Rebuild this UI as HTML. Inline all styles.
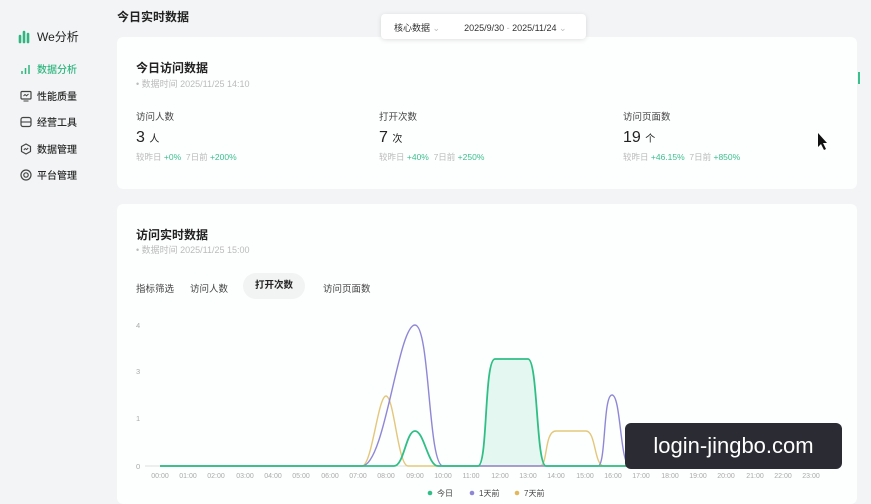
<!DOCTYPE html>
<html><head><meta charset="utf-8">
<style>
*{margin:0;padding:0;box-sizing:border-box}
body{width:871px;height:499px;overflow:hidden;background:#f2f4f5;font-family:"Liberation Sans","Noto Sans CJK SC",sans-serif;color:#222;position:relative}
.abs{position:absolute}
.side div{position:absolute;left:20px;font-size:10px;color:#2a2a2a;display:flex;align-items:center;gap:5px;font-weight:500}
.card{position:absolute;background:#fdfefe;border-radius:6px}
.t{font-size:12px;font-weight:bold;color:#222}
.s{font-size:9px;color:#bbb}
.lab{font-size:9.5px;color:#444}
.num{font-size:16px;color:#222}
.num small{font-size:10px}
.g{color:#3cbf8f}
.cmp{font-size:8.5px;color:#bbb}
</style></head><body>
<div class="side">
 <div style="top:28px;left:18px;font-size:12px;color:#222;font-weight:normal"><svg width="14" height="14" viewBox="0 0 14 14"><path d="M2 12V6M6 12V2M10 12V4" stroke="#2fb57f" stroke-width="2.6" stroke-linecap="round"/></svg>We分析</div>
 <div style="top:61px;color:#2fb57f"><svg width="12" height="12"><path d="M2 11V8M5.5 11V5M9 11V2" stroke="#2fb57f" stroke-width="1.5"/></svg>数据分析</div>
 <div style="top:88px"><svg width="12" height="12"><rect x="1" y="1.5" width="10" height="7.5" rx="1" fill="none" stroke="#444" stroke-width="1.2"/><path d="M3.5 11H8.5M3.5 6L5 4.5L6.5 5.8L8.5 4" fill="none" stroke="#444" stroke-width="1"/></svg>性能质量</div>
 <div style="top:114px"><svg width="12" height="12"><rect x="1" y="1.5" width="10" height="9" rx="2" fill="none" stroke="#444" stroke-width="1.2"/><path d="M1 6H11" stroke="#444" stroke-width="1.1"/></svg>经营工具</div>
 <div style="top:141px"><svg width="12" height="12"><path d="M6 1L10.5 3.5V8.5L6 11L1.5 8.5V3.5Z" fill="none" stroke="#444" stroke-width="1.2" stroke-linejoin="round"/><path d="M3.8 7L5.2 5.5L6.6 6.6L8.2 5" fill="none" stroke="#444" stroke-width="1"/></svg>数据管理</div>
 <div style="top:167px"><svg width="12" height="12"><circle cx="6" cy="6" r="5" fill="none" stroke="#444" stroke-width="1.2"/><circle cx="6" cy="6" r="2.2" fill="none" stroke="#444" stroke-width="1.2"/></svg>平台管理</div>
</div>
<div class="abs" style="left:117px;top:8px;font-size:12px;font-weight:bold">今日实时数据</div>
<div class="card" style="left:117px;top:37px;width:740px;height:152px">
 <div class="t abs" style="left:19px;top:22px">今日访问数据</div>
 <div class="s abs" style="left:19px;top:40px">• 数据时间 2025/11/25 14:10</div>
 <div class="abs" style="left:19px;top:72px"><div class="lab">访问人数</div><div class="num" style="margin-top:6px">3 <small>人</small></div><div class="cmp" style="margin-top:4px">较昨日 <span class="g">+0%</span>&nbsp; 7日前 <span class="g">+200%</span></div></div>
 <div class="abs" style="left:262px;top:72px"><div class="lab">打开次数</div><div class="num" style="margin-top:6px">7 <small>次</small></div><div class="cmp" style="margin-top:4px">较昨日 <span class="g">+40%</span>&nbsp; 7日前 <span class="g">+250%</span></div></div>
 <div class="abs" style="left:506px;top:72px"><div class="lab">访问页面数</div><div class="num" style="margin-top:6px">19 <small>个</small></div><div class="cmp" style="margin-top:4px">较昨日 <span class="g">+46.15%</span>&nbsp; 7日前 <span class="g">+850%</span></div></div>
</div>
<div class="abs" style="left:381px;top:14px;width:205px;height:25px;background:#fff;border-radius:4px;box-shadow:0 1px 5px rgba(0,0,0,.12);font-size:9px;color:#333;padding:7px 0 0 13px">核心数据 <span style="color:#bbb">⌄</span><span style="margin-left:24px">2025/9/30 <span style="color:#bbb">-</span> 2025/11/24 <span style="color:#bbb">⌄</span></span></div>
<div class="abs" style="left:858px;top:72px;width:2px;height:12px;background:#3cbf8f"></div>
<div class="card" style="left:117px;top:204px;width:740px;height:300px">
 <div class="t abs" style="left:19px;top:22px">访问实时数据</div>
 <div class="s abs" style="left:19px;top:39px">• 数据时间 2025/11/25 15:00</div>
 <div class="abs lab" style="left:19px;top:77px">指标筛选</div>
 <div class="abs lab" style="left:73px;top:77px">访问人数</div>
 <div class="abs" style="left:126px;top:69px;width:62px;height:26px;background:#f2f3f3;border-radius:13px;font-size:9.5px;font-weight:bold;text-align:center;line-height:26px">打开次数</div>
 <div class="abs lab" style="left:206px;top:77px">访问页面数</div>
</div>
<svg class="abs" style="left:0;top:0" width="871" height="499">
 <g font-size="7.5" fill="#aaa" font-family="Liberation Sans">
  <text x="136" y="328">4</text><text x="136" y="374">3</text><text x="136" y="421">1</text><text x="136" y="469">0</text>
 </g>
 <line x1="145" y1="466" x2="825" y2="466" stroke="#ddd"/>
 <g font-size="7" fill="#aaa" font-family="Liberation Sans" text-anchor="middle">
  <text x="160" y="478">00:00</text><text x="188" y="478">01:00</text><text x="216" y="478">02:00</text><text x="245" y="478">03:00</text><text x="273" y="478">04:00</text><text x="301" y="478">05:00</text><text x="330" y="478">06:00</text><text x="358" y="478">07:00</text><text x="386" y="478">08:00</text><text x="415" y="478">09:00</text><text x="443" y="478">10:00</text><text x="471" y="478">11:00</text><text x="500" y="478">12:00</text><text x="528" y="478">13:00</text><text x="556" y="478">14:00</text><text x="585" y="478">15:00</text><text x="613" y="478">16:00</text><text x="641" y="478">17:00</text><text x="670" y="478">18:00</text><text x="698" y="478">19:00</text><text x="726" y="478">20:00</text><text x="755" y="478">21:00</text><text x="783" y="478">22:00</text><text x="811" y="478">23:00</text>
 </g>
 <path d="M480 466C488 466 486 359 495 359H528C538 359 536 466 545 466Z" fill="#d9f3e9" opacity=".7"/>
 <path d="M160 466H362C372 466 378 396 386 396C394 396 398 466 408 466H540C548 466 544 431 556 431H586C596 431 594 466 604 466H825" fill="none" stroke="#e3c77a" stroke-width="1.4"/>
 <path d="M160 466H362C385 466 398 325 415 325C430 325 428 466 443 466H598C606 466 603 395 612 395C621 395 620 466 630 466H825" fill="none" stroke="#8f87d6" stroke-width="1.4"/>
 <path d="M160 466H394C404 466 406 431 415 431C424 431 428 466 438 466H478C488 466 484 359 495 359H528C538 359 536 466 546 466H825" fill="none" stroke="#2fbf86" stroke-width="1.8"/>
 <g font-size="8" fill="#444">
  <circle cx="430" cy="493" r="2.3" fill="#2fbf86"/><text x="437" y="496">今日</text>
  <circle cx="472" cy="493" r="2.3" fill="#8f87d6"/><text x="479" y="496">1天前</text>
  <circle cx="517" cy="493" r="2.3" fill="#e3b85a"/><text x="524" y="496">7天前</text>
 </g>
 <path d="M818 133V147L821 144L824 150L826 149L823 143H827Z" fill="#111"/>
</svg>
<div class="abs" style="left:625px;top:423px;width:217px;height:46px;background:#2b2c33;border-radius:6px;color:#fff;font-size:22px;text-align:center;line-height:46px">login-jingbo.com</div>
</body></html>
